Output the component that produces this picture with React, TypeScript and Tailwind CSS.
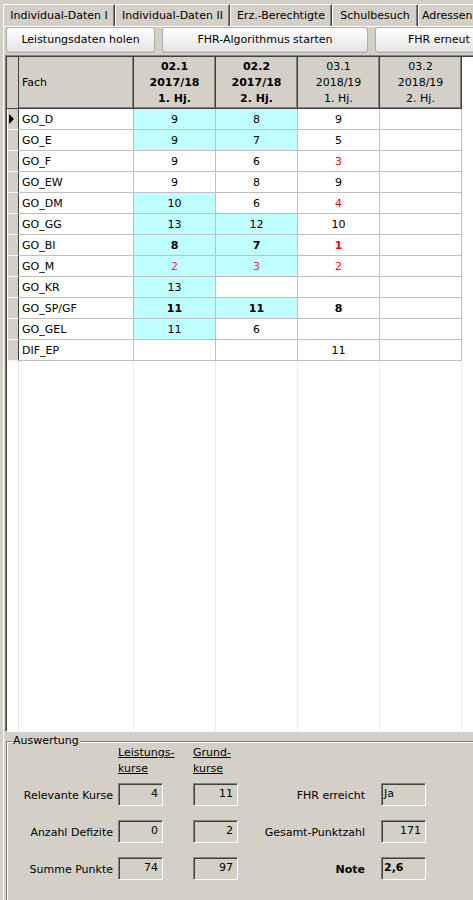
import React from 'react'

type Cell = { v: string; cyan?: boolean; red?: boolean; bold?: boolean }

const c = (v: string, opts: Partial<Cell> = {}): Cell => ({ v, ...opts })
const e: Cell = { v: '' }

const rows: { fach: string; cells: Cell[] }[] = [
  { fach: 'GO_D', cells: [c('9', { cyan: true }), c('8', { cyan: true }), c('9'), e] },
  { fach: 'GO_E', cells: [c('9', { cyan: true }), c('7', { cyan: true }), c('5'), e] },
  { fach: 'GO_F', cells: [c('9'), c('6'), c('3', { red: true }), e] },
  { fach: 'GO_EW', cells: [c('9'), c('8'), c('9'), e] },
  { fach: 'GO_DM', cells: [c('10', { cyan: true }), c('6'), c('4', { red: true }), e] },
  { fach: 'GO_GG', cells: [c('13', { cyan: true }), c('12', { cyan: true }), c('10'), e] },
  { fach: 'GO_BI', cells: [c('8', { cyan: true, bold: true }), c('7', { cyan: true, bold: true }), c('1', { red: true, bold: true }), e] },
  { fach: 'GO_M', cells: [c('2', { cyan: true, red: true }), c('3', { cyan: true, red: true }), c('2', { red: true }), e] },
  { fach: 'GO_KR', cells: [c('13', { cyan: true }), e, e, e] },
  { fach: 'GO_SP/GF', cells: [c('11', { cyan: true, bold: true }), c('11', { cyan: true, bold: true }), c('8', { bold: true }), e] },
  { fach: 'GO_GEL', cells: [c('11', { cyan: true }), c('6'), e, e] },
  { fach: 'DIF_EP', cells: [e, e, c('11'), e] },
]

const heads = [
  { l: ['02.1', '2017/18', '1. Hj.'], bold: true },
  { l: ['02.2', '2017/18', '2. Hj.'], bold: true },
  { l: ['03.1', '2018/19', '1. Hj.'], bold: false },
  { l: ['03.2', '2018/19', '2. Hj.'], bold: false },
]

const tabs = [
  { t: 'Individual-Daten I', w: 'w-[112px] justify-center' },
  { t: 'Individual-Daten II', w: 'w-[115px] justify-center' },
  { t: 'Erz.-Berechtigte', w: 'w-[102px] justify-center' },
  { t: 'Schulbesuch', w: 'w-[86px] justify-center' },
  { t: 'Adressen', w: 'w-[80px] justify-start pl-[3px]' },
]

function Field({ value, left, bold }: { value: string; left?: boolean; bold?: boolean }) {
  return (
    <div
      className={
        'h-[23px] w-[45px] shrink-0 border border-t-[#808080] border-l-[#808080] border-b-white border-r-white shadow-[inset_1px_1px_0_#404040] flex items-center pb-[2px] ' +
        (left ? 'justify-start pl-[2px] ' : 'justify-end pr-[4px] ') +
        (bold ? 'font-bold' : '')
      }
    >
      {value}
    </div>
  )
}

function StatRow({ label, a, b, label2, v, left, bold }: { label: string; a: string; b: string; label2: string; v: string; left?: boolean; bold?: boolean }) {
  return (
    <div className="flex items-center h-[23px]">
      <div className="w-[106px] text-right pt-[2px]">{label}</div>
      <div className="ml-[5px]"><Field value={a} /></div>
      <div className="ml-[30px]"><Field value={b} /></div>
      <div className={'w-[127px] text-right pt-[2px] ' + (bold ? 'font-bold' : '')}>{label2}</div>
      <div className="ml-[16px]"><Field value={v} left={left} bold={bold} /></div>
    </div>
  )
}

export default function App() {
  return (
    <div className="w-[473px] h-[900px] overflow-hidden bg-[#d4d0c8] text-[11px] leading-[16px] text-black font-['DejaVu_Sans',sans-serif] flex flex-col">
      {/* Tabs */}
      <div className="h-[26px] pt-[4px] pl-[3px] flex shrink-0">
        {tabs.map((t) => (
          <div
            key={t.t}
            className={t.w + ' h-[22px] shrink-0 border-t border-l border-white border-r border-r-[#404040] shadow-[inset_-1px_0_0_#808080] flex items-center whitespace-nowrap'}
          >
            {t.t}
          </div>
        ))}
      </div>

      {/* Panel */}
      <div className="flex-1 ml-[3px] border-t border-l border-white flex flex-col min-h-0">
        {/* Buttons */}
        <div className="flex gap-[7px] pl-[2px] h-[26px] shrink-0 whitespace-nowrap">
          <button className="w-[149px] shrink-0 rounded-[3px] border border-[#acacac] bg-gradient-to-b from-white to-[#e4e4e4] shadow-[inset_0_-1px_0_#d0d0d0]">
            Leistungsdaten holen
          </button>
          <button className="w-[206px] shrink-0 rounded-[3px] border border-[#acacac] bg-gradient-to-b from-white to-[#e4e4e4] shadow-[inset_0_-1px_0_#d0d0d0]">
            FHR-Algorithmus starten
          </button>
          <button className="w-[190px] shrink-0 rounded-[3px] border border-[#acacac] bg-gradient-to-b from-white to-[#e4e4e4] shadow-[inset_0_-1px_0_#d0d0d0] text-left pl-[32px]">
            FHR erneut
          </button>
        </div>

        {/* Grid */}
        <div className="mt-[2px] ml-[1px] h-[677px] shrink-0 border-l border-t border-[#808080] border-b border-b-white">
          <div className="h-full border-l border-t border-[#404040] bg-white flex flex-col">
            {/* Header */}
            <div className="flex h-[52px] shrink-0 bg-[#d4d0c8]">
              <div className="w-[12px] shrink-0 border-r border-b border-[#404040]" />
              <div className="w-[115px] shrink-0 border-r border-b border-[#404040] shadow-[inset_-1px_-1px_0_#808080] flex items-center pl-[3px]">
                Fach
              </div>
              {heads.map((h) => (
                <div
                  key={h.l[0]}
                  className={'w-[82px] shrink-0 border-r border-b border-[#404040] shadow-[inset_-1px_-1px_0_#808080] flex flex-col items-center justify-center ' + (h.bold ? 'font-bold' : '')}
                >
                  {h.l.map((x) => (
                    <span key={x}>{x}</span>
                  ))}
                </div>
              ))}
              <div className="flex-1 bg-white" />
            </div>

            {/* Rows */}
            {rows.map((r, i) => (
              <div key={r.fach} className="flex h-[21px] shrink-0">
                <div className="w-[12px] shrink-0 bg-[#d4d0c8] border-r border-[#404040] border-b border-b-[#f4f4f4] shadow-[inset_1px_0_0_#ffffff] flex items-center">
                  {i === 0 && (
                    <svg width="6" height="10" viewBox="0 0 6 10" className="ml-[2px]">
                      <polygon points="0,0 5,5 0,10" fill="#000" />
                    </svg>
                  )}
                </div>
                <div className="w-[115px] shrink-0 border-r border-b border-[#c0c0c0] flex items-center pl-[3px] pt-[1px]">
                  {r.fach}
                </div>
                {r.cells.map((cell, j) => (
                  <div
                    key={j}
                    className={
                      'w-[82px] shrink-0 border-r border-b border-[#c0c0c0] flex items-center justify-center pt-[1px] ' +
                      (cell.cyan ? 'bg-[#c0ffff] ' : 'bg-white ') +
                      (cell.red ? (cell.cyan ? 'text-[#f0206a] ' : 'text-[#ff0000] ') : '') +
                      (cell.bold ? 'font-bold' : '')
                    }
                  >
                    {cell.v}
                  </div>
                ))}
                <div className="flex-1" />
              </div>
            ))}

            {/* Empty area */}
            <div className="flex flex-1">
              <div className="w-[12px] shrink-0 border-r border-[#e4e4e4]" />
              <div className="w-[115px] shrink-0 border-r border-[#ececec]" />
              <div className="w-[82px] shrink-0 border-r border-[#ececec]" />
              <div className="w-[82px] shrink-0 border-r border-[#ececec]" />
              <div className="w-[82px] shrink-0 border-r border-[#ececec]" />
              <div className="w-[82px] shrink-0 border-r border-[#ececec]" />
              <div className="flex-1" />
            </div>
          </div>
        </div>

        {/* Auswertung */}
        <div className="relative mt-[9px] ml-[2px] w-[480px] h-[200px] shrink-0 border border-[#808080] shadow-[inset_1px_1px_0_#ffffff]">
          <span className="absolute -top-[9px] left-[5px] px-[1px] bg-[#d4d0c8]">Auswertung</span>
          <div className="pt-[3px]">
            <div className="flex">
              <div className="ml-[111px] w-[75px] underline">
                Leistungs-
                <br />
                kurse
              </div>
              <div className="underline">
                Grund-
                <br />
                kurse
              </div>
            </div>
            <div className="mt-[6px] flex flex-col gap-[14px]">
              <StatRow label="Relevante Kurse" a="4" b="11" label2="FHR erreicht" v="Ja" left />
              <StatRow label="Anzahl Defizite" a="0" b="2" label2="Gesamt-Punktzahl" v="171" />
              <StatRow label="Summe Punkte" a="74" b="97" label2="Note" v="2,6" left bold />
            </div>
          </div>
        </div>
      </div>
    </div>
  )
}
